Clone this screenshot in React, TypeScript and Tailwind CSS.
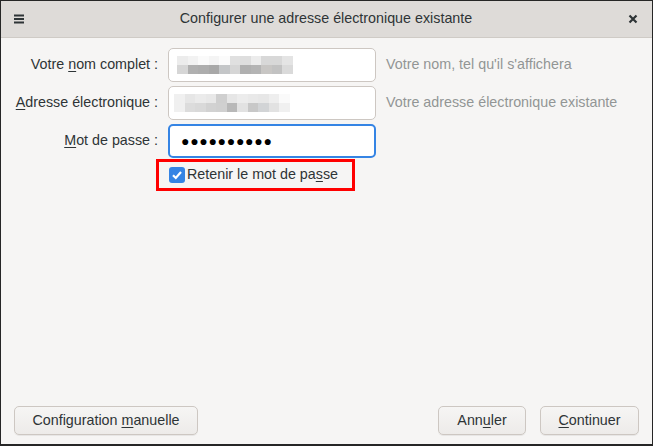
import React from "react";

const font = { fontFamily: '"Liberation Sans", Arial, sans-serif' };

// pixelated blur for hidden values
const blur1 = [
  ["#ececec", "#f2f2f2", "#fafafa", "#f4f4f4", "#fbfbfb", "#e0e0e0", "#dedede", "#ececec", "#d8d8d8", "#d8d8d8", "#e4e4e4"],
  ["#d6d6d6", "#b0b0b0", "#adadad", "#a8a8a8", "#c4c6c8", "#d6d6d6", "#b0b0b0", "#b4b4b4", "#c8c6c4", "#c2c2c2", "#dadada"],
];
const blur2 = [
  ["#f0f0f0", "#e6e6e6", "#ebebeb", "#e8e8e8", "#cfcfcf", "#e6e6e6", "#ececec", "#e9e9e9", "#e7e7e7", "#eeeeee", "#fafafa"],
  ["#f0f0f0", "#dcdcdc", "#d9d9d9", "#d2d2d2", "#d0d0d0", "#b8b8b8", "#e2e2e2", "#c8c8c8", "#d2d4d6", "#e2e2e2", "#f0f0f0"],
];

function Blur({ rows }: { rows: string[][] }) {
  return (
    <div className="flex flex-col">
      {rows.map((r, i) => (
        <div key={i} className="flex">
          {r.map((c, j) => (
            <div key={j} className="h-[9px] w-[10.5px]" style={{ backgroundColor: c }} />
          ))}
        </div>
      ))}
    </div>
  );
}

function Btn({ children, className = "" }: { children: React.ReactNode; className?: string }) {
  return (
    <button
      className={`h-[29px] rounded-[5px] border border-[#cdc7c2] bg-gradient-to-b from-[#f6f5f4] to-[#edebe9] text-[14.3px] text-[#2e3436] shadow-[0_1px_0_rgba(0,0,0,0.06)] ${className}`}
    >
      {children}
    </button>
  );
}

export default function App() {
  return (
    <div style={font} className="flex h-[446px] w-[653px] flex-col overflow-hidden border border-b-2 border-[#262626] bg-[#f6f5f4] text-[#2e3436]">
      {/* titlebar */}
      <div className="flex h-[37px] shrink-0 items-center border-b border-[#cfcbc6] bg-[#dedbd8] pl-[13px] pr-[14px]">
        <svg width="10" height="10" viewBox="0 0 10 10">
          <rect x="0" y="0.5" width="10" height="2" fill="#2e3436" />
          <rect x="0" y="4" width="10" height="2" fill="#2e3436" />
          <rect x="0" y="7.5" width="10" height="2" fill="#2e3436" />
        </svg>
        <div className="flex-1 text-center text-[14.3px] text-[#2e3436]">Configurer une adresse électronique existante</div>
        <svg width="10" height="10" viewBox="0 0 10 10">
          <path d="M1.5 1.5 L8.5 8.5 M8.5 1.5 L1.5 8.5" stroke="#2e3436" strokeWidth="2.2" />
        </svg>
      </div>

      {/* form */}
      <div className="flex flex-1 flex-col pt-[10px]">
        <div className="grid grid-cols-[157px_208px_1fr] items-center gap-x-[10px] gap-y-[4px] text-[14.3px]">
          <div className="text-right">
            Votre <span className="underline underline-offset-2">n</span>om complet :
          </div>
          <div className="flex h-[34px] items-center rounded-[5px] border border-[#cdc7c2] bg-white pl-[8px]">
            <Blur rows={blur1} />
          </div>
          <div className="text-[#929595]">Votre nom, tel qu'il s'affichera</div>

          <div className="text-right">
            <span className="underline underline-offset-2">A</span>dresse électronique :
          </div>
          <div className="flex h-[34px] items-center rounded-[5px] border border-[#cdc7c2] bg-white pl-[5px]">
            <Blur rows={blur2} />
          </div>
          <div className="text-[#929595]">Votre adresse électronique existante</div>

          <div className="text-right">
            <span className="underline underline-offset-2">M</span>ot de passe :
          </div>
          <div className="flex h-[34px] items-center rounded-[5px] border-2 border-[#3584e4] bg-white pl-[11px] text-[14px] tracking-[0.7px] text-black">
            ●●●●●●●●●●
          </div>
          <div />
        </div>

        <div className="ml-[155px] mt-[1px] flex h-[32px] w-[199px] items-center border-[3px] border-[#ff0000] pl-[10px]">
          <span className="flex h-[16px] w-[16px] items-center justify-center rounded-[3px] bg-[#3584e4]">
            <svg width="12" height="12" viewBox="0 0 12 12">
              <path d="M2 6.2 L4.8 9 L10 3" fill="none" stroke="white" strokeWidth="2.2" />
            </svg>
          </span>
          <span className="ml-[2px] text-[14.3px]">
            Retenir le mot de pa<span className="underline underline-offset-2">s</span>se
          </span>
        </div>

        <div className="flex-1" />

        <div className="flex items-center px-[13px] pb-[9px]">
          <Btn className="w-[184px]">
            Configuration <span className="underline underline-offset-2">m</span>anuelle
          </Btn>
          <div className="flex-1" />
          <Btn className="w-[88px]">
            Ann<span className="underline underline-offset-2">u</span>ler
          </Btn>
          <Btn className="ml-[14px] w-[99px]">
            <span className="underline underline-offset-2">C</span>ontinuer
          </Btn>
        </div>
      </div>
    </div>
  );
}
